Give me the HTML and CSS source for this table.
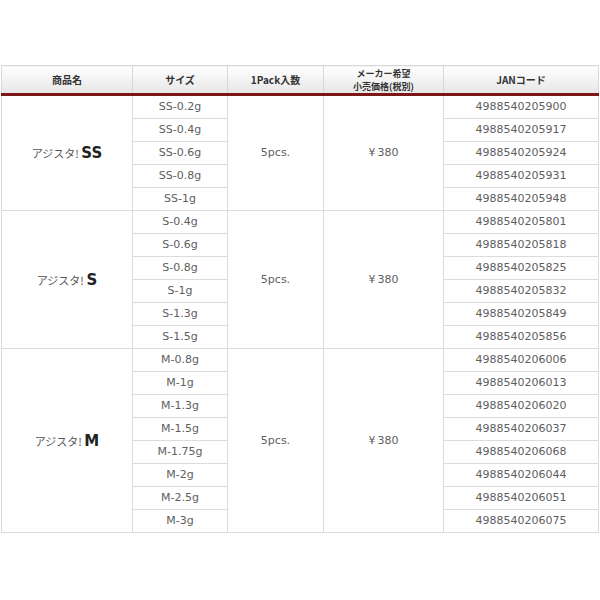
FILE: index.html
```html
<!DOCTYPE html>
<html>
<head>
<meta charset="utf-8">
<link rel="stylesheet" href="styles.css">
</head>
<body>
<table class="spec">
  <colgroup>
    <col class="c1"><col class="c2"><col class="c3"><col class="c4"><col class="c5">
  </colgroup>
  <thead>
    <tr>
      <th>商品名</th>
      <th>サイズ</th>
      <th>1Pack入数</th>
      <th class="two"><span class="ln">メーカー希望</span><span class="ln">小売価格(税別)</span></th>
      <th>JANコード</th>
    </tr>
  </thead>
  <tbody>
    <tr><td rowspan="5" class="name">アジスタ! <b>SS</b></td><td>SS-0.2g</td><td rowspan="5">5pcs.</td><td rowspan="5">¥&thinsp;380</td><td>4988540205900</td></tr>
    <tr><td>SS-0.4g</td><td>4988540205917</td></tr>
    <tr><td>SS-0.6g</td><td>4988540205924</td></tr>
    <tr><td>SS-0.8g</td><td>4988540205931</td></tr>
    <tr><td>SS-1g</td><td>4988540205948</td></tr>
    <tr><td rowspan="6" class="name">アジスタ! <b>S</b></td><td>S-0.4g</td><td rowspan="6">5pcs.</td><td rowspan="6">¥&thinsp;380</td><td>4988540205801</td></tr>
    <tr><td>S-0.6g</td><td>4988540205818</td></tr>
    <tr><td>S-0.8g</td><td>4988540205825</td></tr>
    <tr><td>S-1g</td><td>4988540205832</td></tr>
    <tr><td>S-1.3g</td><td>4988540205849</td></tr>
    <tr><td>S-1.5g</td><td>4988540205856</td></tr>
    <tr><td rowspan="8" class="name">アジスタ! <b>M</b></td><td>M-0.8g</td><td rowspan="8">5pcs.</td><td rowspan="8">¥&thinsp;380</td><td>4988540206006</td></tr>
    <tr><td>M-1g</td><td>4988540206013</td></tr>
    <tr><td>M-1.3g</td><td>4988540206020</td></tr>
    <tr><td>M-1.5g</td><td>4988540206037</td></tr>
    <tr><td>M-1.75g</td><td>4988540206068</td></tr>
    <tr><td>M-2g</td><td>4988540206044</td></tr>
    <tr><td>M-2.5g</td><td>4988540206051</td></tr>
    <tr><td>M-3g</td><td>4988540206075</td></tr>
  </tbody>
</table>
</body>
</html>
```
FILE: styles.css
```css
html, body {
  margin: 0;
  padding: 0;
  background: #fff;
}
body {
  padding: 65px 2px 0 1px;
  font-family: "DejaVu Sans", "Noto Sans CJK JP", sans-serif;
  font-size: 11px;
  color: #5e5e5e;
}
.spec {
  border-collapse: collapse;
  width: 597px;
  table-layout: fixed;
}
.c1 { width: 131px; }
.c2 { width: 95px; }
.c3 { width: 96px; }
.c4 { width: 120px; }
.c5 { width: 155px; }
.spec th {
  height: 27px;
  padding: 0;
  font-family: "Noto Sans CJK JP", sans-serif;
  font-size: 10px;
  font-weight: bold;
  color: #333;
  background: linear-gradient(#ffffff, #e6e6e6);
  border: 1px solid #d8d8d8;
  border-bottom: 3px solid #7d1717;
  line-height: 12px;
  vertical-align: middle;
}
.spec th.two .ln {
  display: block;
  height: 13px;
  line-height: 13px;
  font-size: 9px;
}
.spec td {
  height: 22px;
  padding: 0;
  text-align: center;
  vertical-align: middle;
  border: 1px solid #dcdcdc;
  line-height: 14px;
}
.spec td.name {
  font-family: "Noto Sans CJK JP", sans-serif;
  font-size: 11px;
  color: #555;
}
.spec td.name b {
  font-family: "DejaVu Sans", sans-serif;
  font-size: 15px;
  font-weight: bold;
  color: #222;
}
```
